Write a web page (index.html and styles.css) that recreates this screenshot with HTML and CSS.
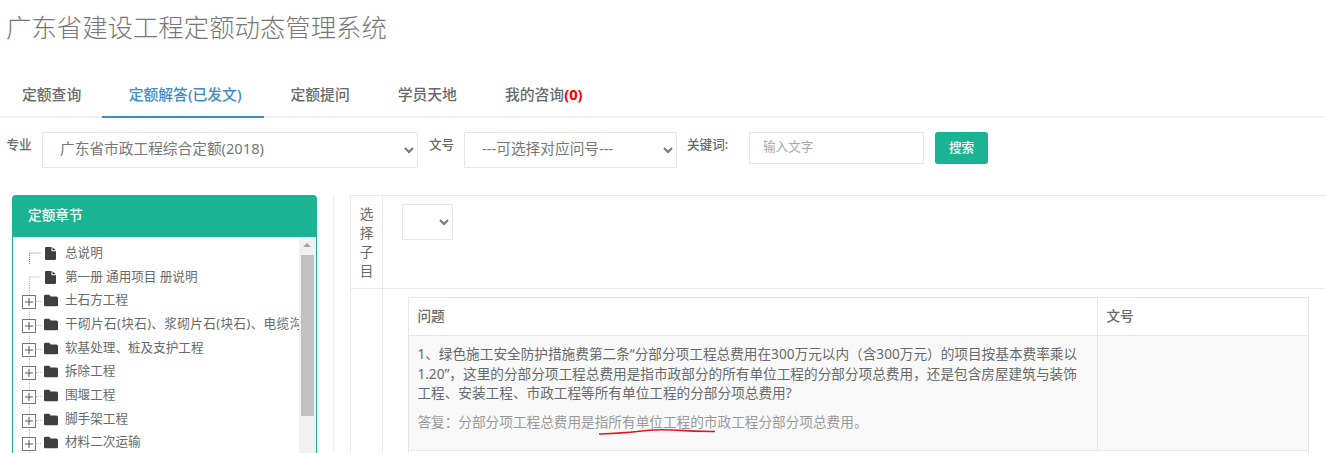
FILE: index.html
```html
<!DOCTYPE html>
<html lang="zh-CN">
<head>
<meta charset="utf-8">
<title>广东省建设工程定额动态管理系统</title>
<link rel="stylesheet" href="styles.css">
</head>
<body>
<svg class="defs" width="0" height="0" aria-hidden="true">
  <symbol id="file" viewBox="0 0 11 13"><path d="M0 1.2Q0 0 1.2 0H6.5V4.2H11V11.8Q11 13 9.8 13H1.2Q0 13 0 11.8Z M7.5 0.2L10.8 3.2H7.5Z" fill="#3f3f3f"/></symbol>
  <symbol id="folder" viewBox="0 0 14 12"><path d="M0 1.5Q0 0 1.5 0H4.5Q5.5 0 6 1L6.5 2H12.5Q14 2 14 3.5V10.5Q14 12 12.5 12H1.5Q0 12 0 10.5Z" fill="#3f3f3f"/></symbol>
  <symbol id="leaf" viewBox="0 0 44 24"><path d="M8.5 12V24M8.5 12H20" fill="none" stroke="#bbb" stroke-dasharray="1 1"/><use href="#file" x="24" y="6" width="11" height="13"/></symbol>
  <symbol id="leaf-first" viewBox="0 0 44 24"><path d="M8.5 12V24M8.5 12H20" fill="none" stroke="#888" stroke-dasharray="1 1"/><use href="#file" x="24" y="6" width="11" height="13"/></symbol>
  <symbol id="branch" viewBox="0 0 44 24"><path d="M8.5 0V24M15 13.5H20" fill="none" stroke="#bbb" stroke-dasharray="1 1"/><rect x="1.5" y="7.5" width="13" height="13" fill="#fff" stroke="#777"/><path d="M4 14H12M8 10V18" stroke="#555" fill="none"/><use href="#folder" x="23" y="6.5" width="14" height="12"/></symbol>
</svg>

<h1 class="title">广东省建设工程定额动态管理系统</h1>

<nav class="tabs">
  <a class="tab">定额查询</a>
  <a class="tab active">定额解答(已发文)</a>
  <a class="tab">定额提问</a>
  <a class="tab">学员天地</a>
  <a class="tab">我的咨询<b class="count">(0)</b></a>
</nav>

<form class="filters">
  <label class="label label-major">专业</label>
  <select class="select select-major"><option>广东省市政工程综合定额(2018)</option></select>
  <label class="label label-doc">文号</label>
  <select class="select select-doc"><option>---可选择对应问号---</option></select>
  <label class="label label-key">关键词:</label>
  <input class="input" type="text" placeholder="输入文字">
  <button class="btn" type="button">搜索</button>
</form>

<main class="main">
  <aside class="panel">
    <div class="panel-head">定额章节</div>
    <div class="panel-body">
      <ul class="tree">
        <li class="node"><svg class="node-art"><use href="#leaf-first"/></svg><span class="node-text">总说明</span></li>
        <li class="node"><svg class="node-art"><use href="#leaf"/></svg><span class="node-text">第一册 通用项目 册说明</span></li>
        <li class="node"><svg class="node-art"><use href="#branch"/></svg><span class="node-text">土石方工程</span></li>
        <li class="node"><svg class="node-art"><use href="#branch"/></svg><span class="node-text node-text-long">干砌片石(块石)、浆砌片石(块石)、电缆沟工程</span></li>
        <li class="node"><svg class="node-art"><use href="#branch"/></svg><span class="node-text">软基处理、桩及支护工程</span></li>
        <li class="node"><svg class="node-art"><use href="#branch"/></svg><span class="node-text">拆除工程</span></li>
        <li class="node"><svg class="node-art"><use href="#branch"/></svg><span class="node-text">围堰工程</span></li>
        <li class="node"><svg class="node-art"><use href="#branch"/></svg><span class="node-text">脚手架工程</span></li>
        <li class="node"><svg class="node-art"><use href="#branch"/></svg><span class="node-text">材料二次运输</span></li>
      </ul>
      <div class="scrollbar">
        <div class="scroll-up"></div>
        <div class="scroll-thumb"></div>
      </div>
    </div>
  </aside>

  <section class="content">
    <table class="outer">
      <tbody>
        <tr class="outer-top">
          <td class="outer-label">选择子目</td>
          <td class="outer-cell"><select class="select select-sub"><option></option></select></td>
        </tr>
        <tr>
          <td class="outer-label"></td>
          <td class="outer-cell outer-cell-list">
            <table class="qa">
              <thead>
                <tr><th class="qa-q">问题</th><th class="qa-n">文号</th></tr>
              </thead>
              <tbody>
                <tr class="striped">
                  <td>
                    <p class="question">1、绿色施工安全防护措施费第二条“分部分项工程总费用在300万元以内&#xFF08;含300万元&#xFF09;的项目按基本费率乘以1.20”&#xFF0C;这里的分部分项工程总费用是指市政部分的所有单位工程的分部分项总费用&#xFF0C;还是包含房屋建筑与装饰工程、安装工程、市政工程等所有单位工程的分部分项总费用?</p>
                    <p class="answer">答复&#xFF1A;分部分项工程总费用是指所有单位工程的市政工程分部分项总费用。<svg class="mark" width="120" height="8" viewBox="0 0 120 8"><path d="M2 6C15 5.5 28 5 40 3.5C50 2 62 1.5 75 2C90 3 105 3.5 118 3.5" fill="none" stroke="#e8141c" stroke-width="1.4"/></svg></p>
                  </td>
                  <td></td>
                </tr>
                <tr><td>&nbsp;</td><td></td></tr>
              </tbody>
            </table>
          </td>
        </tr>
      </tbody>
    </table>
  </section>
</main>
</body>
</html>
```
FILE: styles.css
```css
* { box-sizing: border-box; }
html, body { margin: 0; padding: 0; height: 100%; }
body {
  overflow: hidden;
  background: #fff;
  color: #676a6c;
  font-family: "Noto Sans", "Noto Sans CJK SC", sans-serif;
  font-size: 13.65px;
}
.defs { position: absolute; }

.title {
  margin: 0;
  height: 71px;
  padding: 9px 0 0 6px;
  font-size: 25.4px;
  line-height: 36px;
  font-weight: 300;
  color: #777;
}

.tabs {
  display: flex;
  height: 47px;
  border-bottom: 2px solid #eef0f1;
}
.tab {
  height: 47px;
  padding: 0 21px 0 27px;
  font-size: 14.8px;
  line-height: 46px;
  font-weight: 500;
  color: #676a6c;
  border-bottom: 2px solid transparent;
}
.tab:first-child { padding-left: 22px; padding-right: 20.5px; }
.tab.active { padding-right: 22px; color: #428bca; border-bottom-color: #428bca; }
.count { color: #f00; font-weight: 700; }

.filters {
  display: flex;
  align-items: flex-start;
  height: 77px;
  padding: 14px 0 0 6.5px;
}
.label {
  font-size: 12.6px;
  line-height: 18px;
  font-weight: 500;
  color: #676a6c;
  padding-top: 4px;
}
.label-major { width: 35.5px; }
.label-doc { width: 35px; margin-left: 11px; }
.label-key { width: 62px; margin-left: 10px; }
.select {
  height: 36px;
  padding: 4px 13px 8px;
  border: 1px solid #e5e6e7;
  border-radius: 1px;
  background: #fff;
  color: #777;
  font: inherit;
  font-size: 14.7px;
}
.select-major { width: 376px; }
.select-doc { width: 213px; }
.select-sub { width: 51px; display: block; }
.input {
  width: 175px;
  height: 32px;
  padding: 0 13px 3px;
  border: 1px solid #e5e6e7;
  font: inherit;
  font-size: 12.6px;
}
.input::placeholder { color: #a9a9a9; }
.btn {
  width: 53px;
  height: 32px;
  margin-left: 11px;
  padding: 0 0 4px;
  border: 0;
  border-radius: 3px;
  background: #1ab394;
  color: #fff;
  font: inherit;
  font-size: 12.6px;
  font-weight: 500;
}

.main { display: flex; align-items: flex-start; }
.panel {
  width: 305px;
  margin-left: 12px;
  height: 300px;
  flex: none;
}
.panel-head {
  height: 42px;
  padding-left: 16px;
  border-radius: 4px 4px 0 0;
  background: #1ab394;
  color: #fff;
  font-size: 13.65px;
  font-weight: 500;
  line-height: 40px;
}
.panel-body {
  display: flex;
  height: 258px;
  border: solid #1ab394;
  border-width: 0 1px;
}
.tree {
  list-style: none;
  flex: 1;
  min-width: 0;
  margin: 0;
  padding: 4px 0 0 8px;
  overflow: hidden;
}
.node {
  display: flex;
  align-items: center;
  height: 23.7px;
  white-space: nowrap;
}
.node-art { width: 44px; height: 24px; flex: none; }
.node-text { font-size: 12.6px; line-height: 24px; color: #676a6c; }
.node-text-long { letter-spacing: 0.4px; }
.scrollbar {
  position: relative;
  flex: none;
  width: 17px;
  background: #f1f1f1;
  padding: 18px 2px 0;
}
.scroll-up {
  position: absolute;
  top: 6px;
  left: 4px;
  border: 4px solid transparent;
  border-top: 0;
  border-bottom: 4px solid #a3a3a3;
}
.scroll-thumb { height: 161px; background: #c1c1c1; }

.content {
  flex: 1;
  min-width: 0;
  margin-left: 16px;
  padding-left: 16px;
  border-left: 1px solid #eceeef;
  height: 300px;
}
.outer {
  width: 975px;
  table-layout: fixed;
  border-collapse: collapse;
  border-top: 1px solid #e7eaec;
}
.outer-label {
  width: 32px;
  padding: 8px;
  border: 1px solid #e7eaec;
  border-top: 0;
  line-height: 19px;
  text-align: center;
  vertical-align: top;
  word-break: break-all;
}
.outer-top { height: 92px; }
.outer-top .outer-cell { vertical-align: top; padding: 8px 0 0 19px; }
.outer-top td { border-bottom: 1px solid #e7eaec; }
.outer-cell-list { vertical-align: top; padding: 8px 16px 0 25px; }

.qa {
  width: 901px;
  table-layout: fixed;
  border-collapse: collapse;
  background: #fff;
}
.qa th, .qa td {
  border: 1px solid #e7e7e7;
  padding: 8.4px;
  line-height: 19.5px;
  text-align: left;
  vertical-align: top;
}
.qa th { height: 38px; font-weight: 500; font-size: 13.65px; line-height: 20px; }
.qa-n { width: 211px; }
.striped td { background: #f9f9f9; }
.question { margin: 0 0 9.5px; }
.answer { position: relative; margin: 0 0 9.5px; color: #999; }
.mark { position: absolute; left: 180px; top: 16px; }
```
